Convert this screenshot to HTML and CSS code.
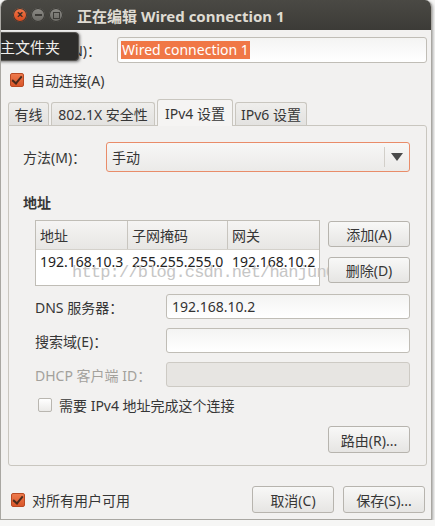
FILE: index.html
```html
<!DOCTYPE html>
<html lang="zh-CN">
<head>
    <meta charset="UTF-8">
    <title>正在编辑 Wired connection 1</title>
    <link rel="stylesheet" href="styles.css">
</head>
<body>
    <div class="window">
        <div class="titlebar">
            <div class="controls">
                <span class="ctl close">×</span>
                <span class="ctl min"><i class="bar"></i></span>
                <span class="ctl max"><i class="box"></i></span>
            </div>
            <div class="title">正在编辑 Wired connection 1</div>
        </div>

        <div class="content">
            <div class="name-row">
                <label class="name-label">(N)：</label>
                <div class="field name-field"><span class="selected">Wired connection 1</span></div>
            </div>

            <div class="check-row">
                <span class="check on"></span>
                <span>自动连接(A)</span>
            </div>

            <div class="tabs">
                <div class="tab t1">有线</div>
                <div class="tab t2">802.1X 安全性</div>
                <div class="tab t3 active">IPv4 设置</div>
                <div class="tab t4">IPv6 设置</div>
            </div>

            <div class="panel">
                <div class="method-row">
                    <span class="method-label">方法(M)：</span>
                    <div class="combo">
                        <span class="combo-text">手动</span>
                        <span class="combo-arrow"></span>
                    </div>
                </div>

                <div class="section-title">地址</div>

                <div class="addr-block">
                    <div class="addr-table">
                        <div class="row head">
                            <div class="cell c1">地址</div>
                            <div class="cell c2">子网掩码</div>
                            <div class="cell c3">网关</div>
                        </div>
                        <div class="row data">
                            <div class="cell c1">192.168.10.3</div>
                            <div class="cell c2">255.255.255.0</div>
                            <div class="cell c3">192.168.10.2</div>
                        </div>
                        <div class="watermark">http://blog.csdn.net/hanjun0612</div>
                    </div>
                    <div class="side-buttons">
                        <button class="btn">添加(A)</button>
                        <button class="btn">删除(D)</button>
                    </div>
                </div>

                <div class="form-grid">
                    <span class="form-label">DNS 服务器：</span>
                    <div class="field">192.168.10.2</div>
                    <span class="form-label">搜索域(E)：</span>
                    <div class="field"></div>
                    <span class="form-label disabled">DHCP 客户端 ID：</span>
                    <div class="field off"></div>
                </div>

                <div class="check-row require">
                    <span class="check"></span>
                    <span>需要 IPv4 地址完成这个连接</span>
                </div>

                <div class="route-row">
                    <button class="btn">路由(R)...</button>
                </div>
            </div>

            <div class="footer">
                <div class="check-row all-users">
                    <span class="check on"></span>
                    <span>对所有用户可用</span>
                </div>
                <button class="btn wide">取消(C)</button>
                <button class="btn wide">保存(S)...</button>
            </div>
        </div>

        <div class="tooltip">主文件夹</div>
    </div>
</body>
</html>
```

FILE: styles.css
```css
body {
    margin: 0;
    background: #f6f6f5;
    font-family: "Noto Sans", "Noto Sans CJK SC", sans-serif;
    font-size: 14px;
    color: #363636;
}
.window {
    position: relative;
    width: 430px;
    height: 519px;
    background: #f2f1f0;
    border: 1px solid #a9a7a2;
    border-top: none;
    border-radius: 7px 7px 0 0;
    box-shadow: 1px 1px 3px rgba(0, 0, 0, 0.35);
    overflow: hidden;
}
.titlebar {
    height: 30px;
    display: flex;
    align-items: center;
    background: linear-gradient(#4a4944, #3c3b37);
    color: #dfdbd2;
}
.controls {
    display: flex;
    gap: 4px;
    margin-left: 12px;
}
.ctl {
    width: 14px;
    height: 14px;
    border-radius: 50%;
    display: flex;
    align-items: center;
    justify-content: center;
    background: linear-gradient(#8c8b86, #6a6964);
    box-shadow: inset 0 0 0 1px #3a3935;
}
.close {
    background: linear-gradient(#f27a4c, #d6471b);
    color: #3c2a22;
    font-size: 12px;
    line-height: 14px;
    font-weight: bold;
}
.bar {
    width: 7px;
    height: 2px;
    background: #3c3b37;
}
.box {
    width: 5px;
    height: 5px;
    border: 1px solid #3c3b37;
}
.title {
    margin-left: 14px;
    font-size: 15px;
    font-weight: bold;
}
.content {
    padding: 7px 4px 0 7px;
}
.name-row {
    display: flex;
    align-items: center;
}
.name-label {
    width: 93px;
    margin-right: 16px;
    text-align: right;
}
.field {
    flex: 1;
    height: 24px;
    border: 1px solid #c0bdb6;
    border-radius: 3px;
    background: linear-gradient(#f4f4f3, #ffffff);
    display: flex;
    align-items: center;
    padding-left: 5px;
    color: #333;
}
.field.off {
    background: #e7e5e2;
    border-color: #cdcac4;
}
.name-field {
    height: 24px;
    padding-left: 3px;
}
.selected {
    background: #f07746;
    color: #fff;
    line-height: 18px;
    padding: 0 1px;
}
.check-row {
    display: flex;
    align-items: center;
    gap: 7px;
    height: 20px;
    margin-top: 7px;
    margin-left: 2px;
}
.check {
    width: 12px;
    height: 12px;
    border: 1px solid #b9b6b0;
    border-radius: 2px;
    background: linear-gradient(#ffffff, #ebeae8);
    position: relative;
}
.check.on {
    background: linear-gradient(#ee7a4c, #d9562a);
    border-color: #b94a24;
}
.check.on::after {
    content: "";
    position: absolute;
    left: 3px;
    top: 0px;
    width: 4px;
    height: 8px;
    border: solid #4a2a1c;
    border-width: 0 2px 2px 0;
    transform: rotate(40deg);
}
.tabs {
    display: flex;
    align-items: flex-end;
    gap: 2px;
    margin-top: 9px;
    height: 26px;
}
.tab {
    height: 22px;
    display: flex;
    align-items: center;
    justify-content: center;
    border: 1px solid #c9c6bf;
    border-bottom: none;
    border-radius: 3px 3px 0 0;
    background: linear-gradient(#efeeec, #e3e2e0);
}
.t1 { width: 39px; }
.t2 { width: 102px; }
.t3 { width: 74px; }
.t4 { width: 70px; }
.tab.active {
    height: 26px;
    background: #f5f4f3;
    position: relative;
    top: 1px;
}
.panel {
    height: 339px;
    border: 1px solid #c9c6bf;
    border-radius: 0 3px 3px 3px;
    padding: 0 16px 0 14px;
}
.method-row {
    display: flex;
    align-items: center;
    margin-top: 16px;
}
.method-label {
    width: 83px;
}
.combo {
    flex: 1;
    height: 28px;
    border: 1px solid #e98c69;
    border-radius: 3px;
    background: linear-gradient(#f7f7f6, #ebeae8);
    display: flex;
    align-items: center;
}
.combo-text {
    flex: 1;
    padding-left: 5px;
}
.combo-arrow {
    width: 24px;
    height: 20px;
    border-left: 1px solid #d2cfc9;
    position: relative;
}
.combo-arrow::after {
    content: "";
    position: absolute;
    left: 6px;
    top: 6px;
    border-left: 6px solid transparent;
    border-right: 6px solid transparent;
    border-top: 8px solid #4a4a4a;
}
.section-title {
    font-weight: bold;
    margin-top: 21px;
    height: 20px;
    line-height: 20px;
}
.addr-block {
    display: flex;
    margin-top: 7px;
    margin-left: 12px;
    gap: 8px;
}
.addr-table {
    position: relative;
    width: 283px;
    height: 64px;
    border: 1px solid #c0bdb6;
    background: #ffffff;
}
.row {
    display: flex;
}
.row.head {
    height: 28px;
    background: linear-gradient(#f5f4f3, #e7e6e4);
    border-bottom: 1px solid #d4d1cb;
}
.row.data {
    height: 35px;
}
.cell {
    display: flex;
    align-items: center;
    padding-left: 4px;
    box-sizing: border-box;
}
.head .cell {
    border-right: 1px solid #c8c5bf;
}
.head .c3 { border-right: none; }
.c1 { width: 92px; }
.c2 { width: 100px; }
.c3 { flex: 1; }
.data .cell {
    align-items: flex-start;
    padding-top: 2px;
    line-height: 20px;
    color: #222;
}
.watermark {
    position: absolute;
    left: 36px;
    top: 42px;
    font-family: "Liberation Mono", monospace;
    font-size: 17px;
    line-height: 20px;
    letter-spacing: -0.8px;
    color: #c6c6c6;
    white-space: nowrap;
}
.side-buttons {
    position: relative;
    display: flex;
    flex-direction: column;
    gap: 10px;
    margin-top: 1px;
    background: #f2f1f0;
}
.btn {
    width: 82px;
    height: 27px;
    padding: 0;
    font-family: "Noto Sans", "Noto Sans CJK SC", sans-serif;
    font-size: 14px;
    color: #363636;
    border: 1px solid #b7b4ae;
    border-radius: 3px;
    background: linear-gradient(#f8f8f7, #e6e5e3);
}
.side-buttons .btn {
    height: 26px;
}
.form-grid {
    display: grid;
    grid-template-columns: 131px 1fr;
    row-gap: 9px;
    align-items: center;
    margin-top: 8px;
    margin-left: 12px;
}
.form-grid .field {
    height: 23px;
}
.form-label.disabled {
    color: #a3a19c;
}
.require {
    margin-top: 8px;
    margin-left: 15px;
}
.route-row {
    display: flex;
    justify-content: flex-end;
    margin-top: 11px;
}
.footer {
    display: flex;
    align-items: center;
    gap: 9px;
    margin-top: 20px;
    padding-right: 2px;
}
.footer .all-users {
    flex: 1;
    margin-top: 0;
    margin-left: 3px;
}
.tooltip {
    position: absolute;
    left: -8px;
    top: 32px;
    width: 78px;
    height: 27px;
    padding-left: 6px;
    display: flex;
    align-items: center;
    background: #2e2d2b;
    border: 1px solid #55534f;
    border-radius: 4px;
    color: #f0efec;
    font-size: 15px;
    box-shadow: 1px 1px 3px rgba(0, 0, 0, 0.5);
}
```
